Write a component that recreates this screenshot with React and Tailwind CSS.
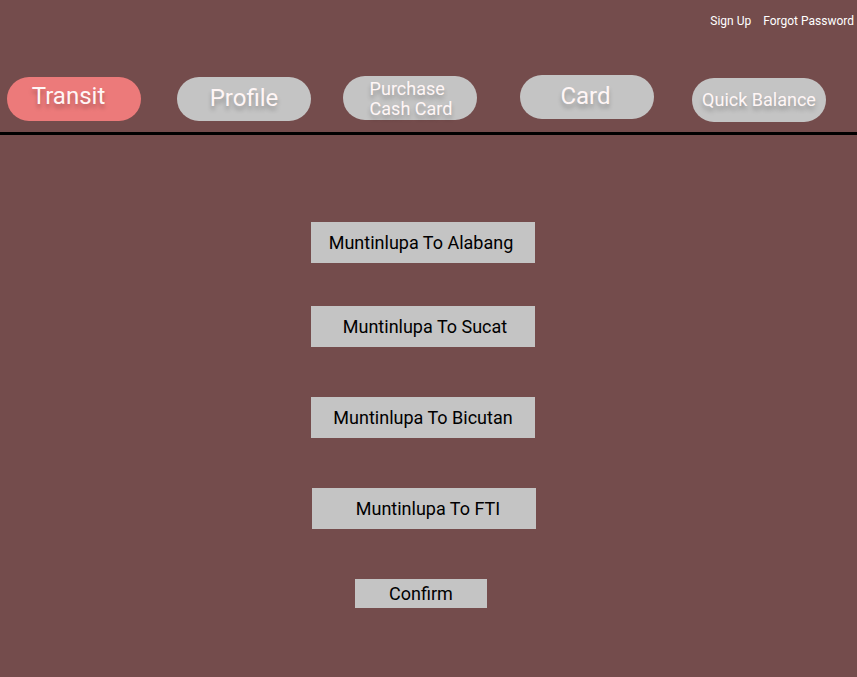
import React from "react";

const tabs = [
  { label: "Transit", active: true, mt: "mt-[2px]", ml: "ml-[7px]", text: "text-[24px] pr-[11px] pb-[7px]" },
  { label: "Profile", mt: "mt-[2px]", ml: "ml-[36px]", text: "text-[24px] pb-[2px]" },
  { label: ["Purchase", "Cash Card"], mt: "mt-[1px]", ml: "ml-[32px]", text: "text-[18px] leading-[20px] text-left pl-[2px] pt-[2px]" },
  { label: "Card", mt: "mt-0", ml: "ml-[43px]", text: "text-[24px] pb-[2px] pr-[3px]" },
  { label: "Quick Balance", mt: "mt-[3px]", ml: "ml-[38px]", text: "text-[18px] pb-[2px]" },
];

const rutas = [
  { label: "Muntinlupa To Alabang", mt: "mt-[87px]", ml: "ml-[311px]", pad: "pr-[4px]" },
  { label: "Muntinlupa To Sucat", mt: "mt-[43px]", ml: "ml-[311px]", pad: "pl-[4px]" },
  { label: "Muntinlupa To Bicutan", mt: "mt-[50px]", ml: "ml-[311px]", pad: "" },
  { label: "Muntinlupa To FTI", mt: "mt-[50px]", ml: "ml-[312px]", pad: "pl-[8px]" },
];

export default function App() {
  return (
    <div className="min-h-[677px] w-full bg-[#744c4c] font-['Roboto',sans-serif] overflow-hidden">
      {/* links do topo */}
      <div className="flex justify-end gap-3 pt-[13px] pr-[3px] text-xs leading-4 text-white">
        <span>Sign Up</span>
        <span>Forgot Password</span>
      </div>

      {/* abas */}
      <div className="flex items-start mt-[46px]">
        {tabs.map((t) => (
          <button
            key={Array.isArray(t.label) ? t.label.join(" ") : t.label}
            className={`${t.ml} ${t.mt} w-[134px] h-[44px] rounded-[22px] flex items-center justify-center text-[#fff6f6] [text-shadow:0_4px_4px_rgba(0,0,0,0.25)] ${
              t.active ? "bg-[#ec7a7a]" : "bg-[#c4c4c4]"
            }`}
          >
            {Array.isArray(t.label) ? (
              <span className={`${t.text} flex flex-col whitespace-nowrap`}>
                {t.label.map((l) => (
                  <span key={l}>{l}</span>
                ))}
              </span>
            ) : (
              <span className={t.text}>{t.label}</span>
            )}
          </button>
        ))}
      </div>

      <div className="mt-[10px] h-[3px] bg-black" />

      {/* rotas */}
      <div className="flex flex-col items-start">
        {rutas.map((r) => (
          <button
            key={r.label}
            className={`${r.mt} ${r.ml} w-[224px] h-[41px] bg-[#c4c4c4] text-[18px] text-black flex items-center justify-center ${r.pad}`}
          >
            {r.label}
          </button>
        ))}
        <button className="mt-[50px] ml-[355px] w-[132px] h-[29px] bg-[#c4c4c4] text-[18px] text-black flex items-center justify-center">
          Confirm
        </button>
      </div>
    </div>
  );
}
